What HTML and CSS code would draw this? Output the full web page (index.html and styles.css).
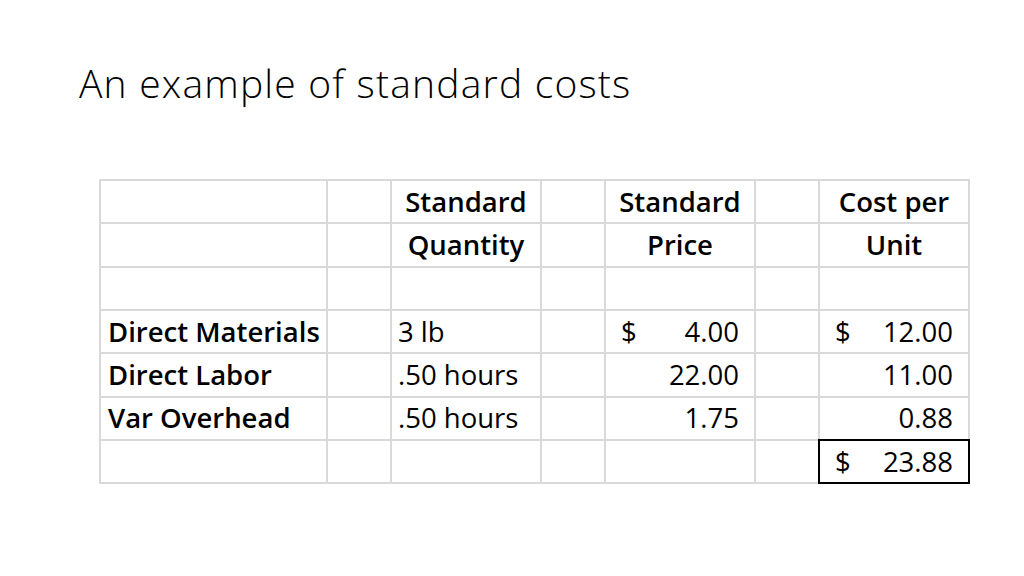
FILE: index.html
```html
<!DOCTYPE html>
<html>
<head>
<meta charset="utf-8">
<link rel="stylesheet" href="styles.css">
</head>
<body>
<div class="slide">
  <h1 class="title">An example of standard costs</h1>
  <table class="grid">
    <colgroup>
      <col class="c-label"><col class="c-gap"><col class="c-wide"><col class="c-gap"><col class="c-wide"><col class="c-gap"><col class="c-wide">
    </colgroup>
    <tr>
      <td></td><td></td><td class="hd">Standard</td><td></td><td class="hd">Standard</td><td></td><td class="hd">Cost per</td>
    </tr>
    <tr>
      <td></td><td></td><td class="hd">Quantity</td><td></td><td class="hd">Price</td><td></td><td class="hd">Unit</td>
    </tr>
    <tr>
      <td></td><td></td><td></td><td></td><td></td><td></td><td></td>
    </tr>
    <tr>
      <td class="lbl">Direct Materials</td><td></td><td class="qty">3 lb</td><td></td>
      <td class="acc"><span class="cur">$</span><span class="num">4.00</span></td><td></td>
      <td class="acc"><span class="cur">$</span><span class="num">12.00</span></td>
    </tr>
    <tr>
      <td class="lbl">Direct Labor</td><td></td><td class="qty">.50 hours</td><td></td>
      <td class="acc"><span class="num">22.00</span></td><td></td>
      <td class="acc"><span class="num">11.00</span></td>
    </tr>
    <tr>
      <td class="lbl">Var Overhead</td><td></td><td class="qty">.50 hours</td><td></td>
      <td class="acc"><span class="num">1.75</span></td><td></td>
      <td class="acc"><span class="num">0.88</span></td>
    </tr>
    <tr>
      <td></td><td></td><td></td><td></td><td></td><td></td>
      <td class="acc total"><span class="cur">$</span><span class="num">23.88</span></td>
    </tr>
  </table>
</div>
</body>
</html>
```
FILE: styles.css
```css
html, body {
  margin: 0;
  padding: 0;
  background: #ffffff;
}
body {
  font-family: "Open Sans", "Liberation Sans", sans-serif;
  color: #000000;
}
.slide {
  width: 1024px;
  height: 576px;
  overflow: hidden;
}
.title {
  margin: 0;
  padding: 60px 0 0 79px;
  font-weight: 300;
  font-size: 39px;
  letter-spacing: 1.2px;
  line-height: 46px;
  height: 119px;
}
.grid {
  margin-left: 99px;
  border-collapse: collapse;
  table-layout: fixed;
  width: 871px;
}
.c-label { width: 227px; }
.c-gap { width: 64px; }
.c-wide { width: 150px; }
.grid td {
  border: 2px solid #d9d9d9;
  height: 41.33px;
  padding: 0 6px;
  font-size: 27.5px;
  line-height: 30px;
  vertical-align: middle;
  white-space: nowrap;
}
.grid td.hd {
  font-weight: 600;
  text-align: center;
}
.grid td.lbl {
  font-weight: 600;
  padding-left: 7px;
}
.grid td.acc {
  padding: 0 15px;
}
.acc .cur {
  float: left;
}
.acc .num {
  float: right;
}
.grid td.total {
  outline: 2px solid #000000;
  outline-offset: -1px;
}
```
